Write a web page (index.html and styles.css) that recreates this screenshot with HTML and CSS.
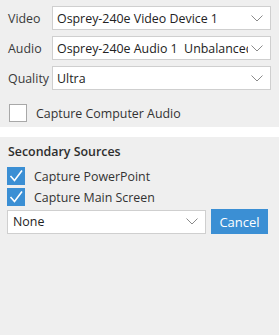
FILE: index.html
```html
<!DOCTYPE html>
<html>
<head>
<meta charset="utf-8">
<link rel="stylesheet" href="styles.css">
</head>
<body>
<div class="top">
  <div class="row">
    <span class="label">Video</span>
    <div class="select"><span class="value">Osprey-240e Video Device 1</span><svg class="chev" width="12" height="7" viewBox="0 0 12 7"><polyline points="0.5,0.5 6,6 11.5,0.5" fill="none" stroke="#8a8a8a" stroke-width="1"/></svg></div>
  </div>
  <div class="row">
    <span class="label">Audio</span>
    <div class="select"><span class="value">Osprey-240e Audio 1&nbsp; Unbalanced</span><svg class="chev" width="12" height="7" viewBox="0 0 12 7"><polyline points="0.5,0.5 6,6 11.5,0.5" fill="none" stroke="#8a8a8a" stroke-width="1"/></svg></div>
  </div>
  <div class="row">
    <span class="label">Quality</span>
    <div class="select"><span class="value">Ultra</span><svg class="chev" width="12" height="7" viewBox="0 0 12 7"><polyline points="0.5,0.5 6,6 11.5,0.5" fill="none" stroke="#8a8a8a" stroke-width="1"/></svg></div>
  </div>
  <div class="check-row unchecked-row">
    <span class="box"></span>
    <span class="check-label">Capture Computer Audio</span>
  </div>
</div>
<div class="band"></div>
<div class="secondary">
  <div class="heading">Secondary Sources</div>
  <div class="check-row sec-row">
    <span class="box checked"><svg width="18" height="18" viewBox="0 0 18 18"><polyline points="3.5,9 7.5,13.5 15,3.5" fill="none" stroke="#fff" stroke-width="1.6"/></svg></span>
    <span class="check-label">Capture PowerPoint</span>
  </div>
  <div class="check-row sec-row">
    <span class="box checked"><svg width="18" height="18" viewBox="0 0 18 18"><polyline points="3.5,9 7.5,13.5 15,3.5" fill="none" stroke="#fff" stroke-width="1.6"/></svg></span>
    <span class="check-label">Capture Main Screen</span>
  </div>
  <div class="action-row">
    <div class="select none-select"><span class="value">None</span><svg class="chev" width="12" height="7" viewBox="0 0 12 7"><polyline points="0.5,0.5 6,6 11.5,0.5" fill="none" stroke="#8a8a8a" stroke-width="1"/></svg></div>
    <button class="btn">Cancel</button>
  </div>
</div>
</body>
</html>
```

FILE: styles.css
```css
html, body {
  margin: 0;
  padding: 0;
  background: #efefef;
  font-family: "Open Sans", "Noto Sans", sans-serif;
  font-size: 12.4px;
  color: #333;
}
.top {
  padding: 6px 8px 0 8px;
}
.row {
  display: grid;
  grid-template-columns: 44px 1fr;
  align-items: center;
  height: 24px;
  margin-bottom: 6px;
}
.label {
  color: #3a3a3a;
}
.select {
  display: flex;
  align-items: center;
  height: 24px;
  box-sizing: border-box;
  border: 1px solid #cfcfcf;
  background: #fff;
  padding: 0 7px 0 4px;
  min-width: 0;
}
.value {
  flex: 1;
  min-width: 0;
  overflow: hidden;
  white-space: nowrap;
  color: #222;
}
.chev {
  flex: none;
  margin-left: 3px;
}
.check-row {
  display: flex;
  align-items: center;
  height: 22px;
}
.unchecked-row {
  margin-top: 12px;
  padding-left: 1px;
}
.box {
  width: 18px;
  height: 18px;
  box-sizing: border-box;
  border: 1px solid #a8a8a8;
  background: #fff;
  flex: none;
}
.box.checked {
  border: none;
  background: #3b8fd4;
}
.box svg {
  display: block;
}
.check-label {
  margin-left: 9px;
  color: #333;
}
.band {
  height: 10px;
  background: #fff;
  margin-top: 3px;
}
.secondary {
  padding: 5px 8px 0 7px;
}
.heading {
  font-weight: 600;
  color: #2e2e2e;
  padding-left: 1px;
  height: 20px;
  line-height: 20px;
  margin-bottom: 5px;
}
.sec-row {
  height: 18px;
  margin-bottom: 3px;
}
.action-row {
  display: flex;
  align-items: center;
  gap: 5px;
}
.none-select {
  width: 199px;
  padding-left: 5px;
}
.btn {
  height: 25px;
  width: 57px;
  border: none;
  background: #3b8fd4;
  color: #fff;
  font-family: inherit;
  font-size: 13px;
  padding: 0;
}
```
